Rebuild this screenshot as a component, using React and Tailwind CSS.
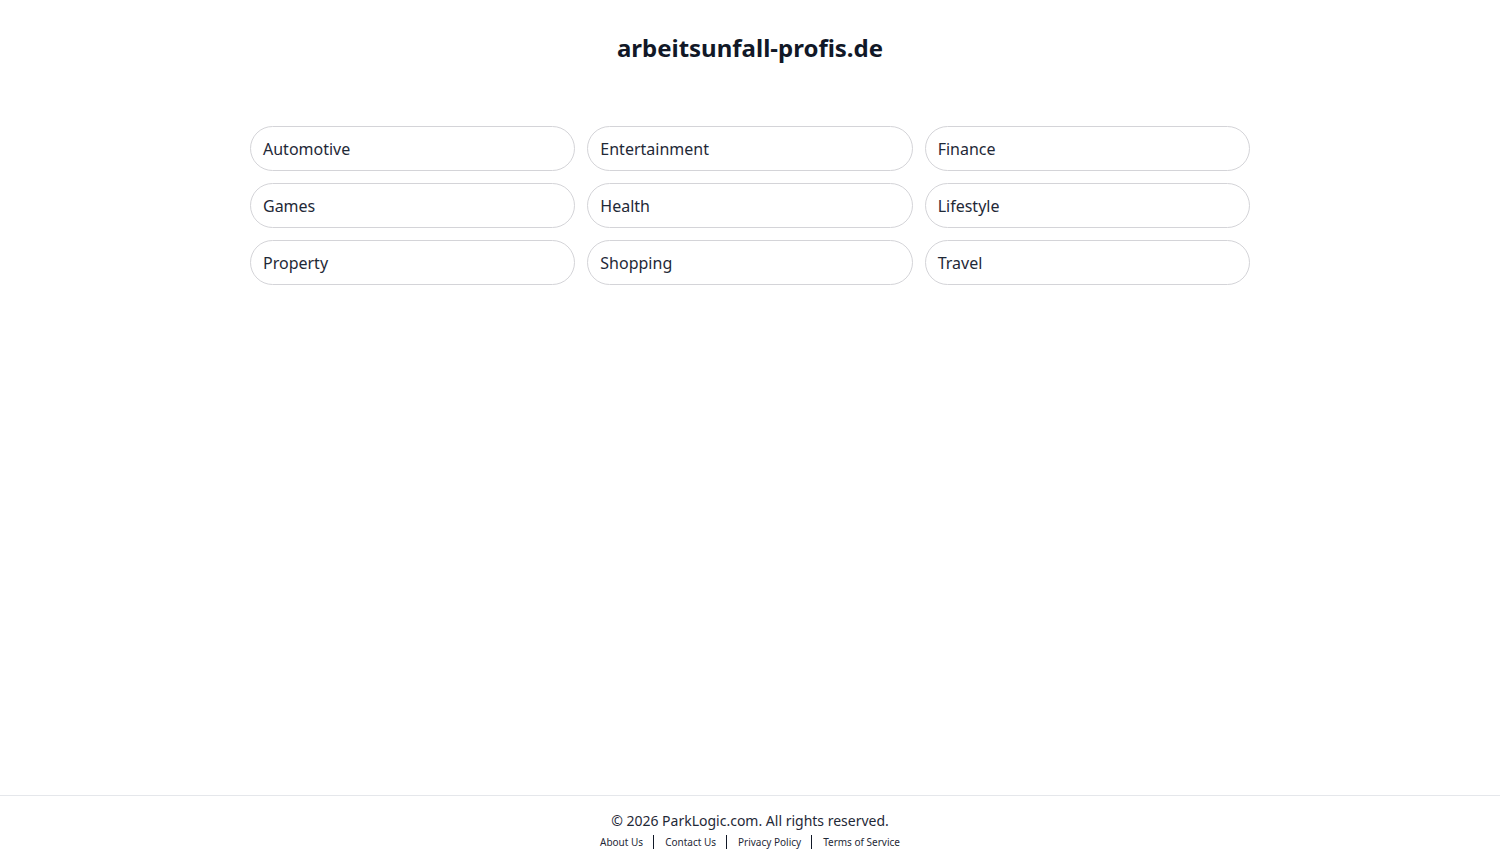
const CATEGORIES = [
  'Automotive', 'Entertainment', 'Finance',
  'Games', 'Health', 'Lifestyle',
  'Property', 'Shopping', 'Travel'
];

const LINKS = ['About Us', 'Contact Us', 'Privacy Policy', 'Terms of Service'];

export default function App() {
  return (
    <div className="min-h-screen flex flex-col bg-white text-[#111827]" style={{ fontFamily: '"Noto Sans", "Open Sans", sans-serif' }}>
      <main className="flex-1">
        <h1 className="pt-8 text-center text-2xl leading-8 font-bold text-[#111827]">arbeitsunfall-profis.de</h1>
        <div className="mx-auto mt-[62px] w-[1000px] grid grid-cols-3 gap-3">
          {CATEGORIES.map(c => (
            <a key={c} href="#" className="h-[45px] flex items-center px-3 rounded-full border border-[#d4d4d8] text-base text-[#1f2937]">
              {c}
            </a>
          ))}
        </div>
      </main>
      <footer className="border-t border-[#e5e7eb] pt-[15px] pb-[14px] text-center">
        <div className="text-sm leading-5 text-[#1f2937]">© 2026 ParkLogic.com. All rights reserved.</div>
        <div className="mt-[1px] h-5 flex items-center justify-center text-[10px] leading-5 text-[#1f2937]">
          {LINKS.map((l, i) => (
            <span key={l} className="flex items-center">
              {i > 0 && <span className="ml-[10px] mr-[11px] w-px h-[14px] bg-[#111827]" />}
              <a href="#">{l}</a>
            </span>
          ))}
        </div>
      </footer>
    </div>
  );
}
